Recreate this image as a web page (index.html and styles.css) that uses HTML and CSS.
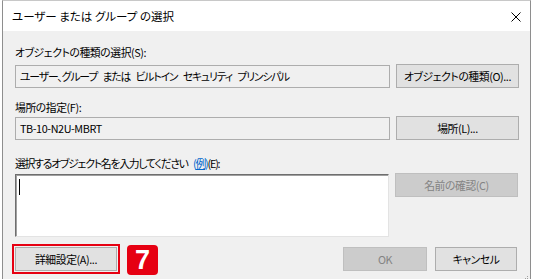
FILE: index.html
```html
<!DOCTYPE html>
<html lang="ja">
<head>
    <meta charset="UTF-8">
    <meta name="viewport" content="width=device-width, initial-scale=1.0">
    <title>ユーザー または グループ の選択</title>
    <link rel="stylesheet" href="styles.css">
</head>
<body>
    <div class="dialog">
        <div class="title-bar">
            <span class="title">ユーザー または グループ の選択</span>
            <svg class="close" width="10" height="10" viewBox="0 0 10 10">
                <path d="M0.5 0.5 L9.5 9.5 M9.5 0.5 L0.5 9.5" stroke="#000" stroke-width="1" fill="none"/>
            </svg>
        </div>
        <div class="dialog-body">
            <div class="label first">オブジェクトの種類の選択(S):</div>
            <div class="row">
                <div class="readonly-box narrow">ユーザー、グループ または ビルトイン セキュリティ プリンシパル</div>
                <button class="win-button side">オブジェクトの種類(O)...</button>
            </div>

            <div class="label">場所の指定(F):</div>
            <div class="row">
                <div class="readonly-box">TB-10-N2U-MBRT</div>
                <button class="win-button side">場所(L)...</button>
            </div>

            <div class="label third">選択するオブジェクト名を入力してください <span class="link">(<u>例</u>)</span>(E):</div>
            <div class="row top">
                <div class="names-input"><span class="caret"></span></div>
                <button class="win-button side disabled">名前の確認(C)</button>
            </div>

            <div class="bottom-row">
                <button class="win-button advanced">詳細設定(A)...</button>
                <div class="step-badge">7</div>
                <div class="spacer"></div>
                <button class="win-button ok disabled">OK</button>
                <button class="win-button cancel">キャンセル</button>
            </div>
        </div>
        <svg class="grip" width="7" height="7" viewBox="0 0 7 7">
            <rect x="5" y="1" width="1" height="1" fill="#a0a0a0"/>
            <rect x="3" y="3" width="1" height="1" fill="#a0a0a0"/>
            <rect x="5" y="3" width="1" height="1" fill="#a0a0a0"/>
            <rect x="1" y="5" width="1" height="1" fill="#a0a0a0"/>
            <rect x="3" y="5" width="1" height="1" fill="#a0a0a0"/>
            <rect x="5" y="5" width="1" height="1" fill="#a0a0a0"/>
        </svg>
    </div>
</body>
</html>
```

FILE: styles.css
```css
body {
    margin: 0;
    background-color: #ffffff;
    font-family: "Noto Sans CJK JP", "Noto Sans", sans-serif;
    font-size: 10.8px;
    letter-spacing: -0.4px;
    font-feature-settings: "palt" 1; /* narrow kana, like Meiryo UI */
    color: #000000;
}

.dialog {
    position: relative;
    width: 529px;
    margin-left: 2px;
    border: 1px solid #8e8e8e;
    border-top-color: #c8c8c8;
    box-sizing: border-box;
    background-color: #f0f0f0;
}

.title-bar {
    height: 30px;
    background-color: #ffffff;
    display: flex;
    align-items: center;
    justify-content: space-between;
    padding: 0 9px 0 9px;
}

.title {
    font-size: 11.5px;
    letter-spacing: 0;
    margin-top: -1px;
}

.close {
    margin-top: 2px;
}

.dialog-body {
    padding: 13px 11px 8px 12px;
}

.label {
    line-height: 16px;
    height: 16px;
    margin-bottom: 4px;
}

.label.first {
    margin-bottom: 4px;
}

.label:not(.first) {
    margin-top: 11px;
    margin-bottom: 1px;
}

.label.third {
    margin-top: 15px;
    margin-bottom: 2px;
    letter-spacing: -1.2px;
    word-spacing: 4px;
}

.link {
    color: #0066cc;
}

.row {
    display: flex;
    gap: 6px;
    align-items: center;
}

.row.top {
    align-items: flex-start;
}

.readonly-box {
    width: 375px;
    height: 23px;
    box-sizing: border-box;
    border: 1px solid #adadad;
    background-color: #f0f0f0;
    padding: 0 4px;
    display: flex;
    align-items: center;
    white-space: nowrap;
}

.readonly-box.narrow {
    letter-spacing: -1.1px;
    word-spacing: 4px;
}

.names-input {
    width: 374px;
    height: 63px;
    margin-top: 1px;
    box-sizing: border-box;
    background-color: #ffffff;
    border: 1px solid;
    border-color: #6e6e6e #e3e3e3 #e3e3e3 #6e6e6e;
    box-shadow: inset 1px 1px #a0a0a0;
    padding: 4px 3px;
}

.caret {
    display: block;
    width: 1px;
    height: 16px;
    background-color: #000000;
}

.win-button {
    height: 24px;
    box-sizing: border-box;
    border: 1px solid #adadad;
    background-color: #e1e1e1;
    font-family: inherit;
    font-size: 10.8px;
    letter-spacing: -0.4px;
    font-feature-settings: "palt" 1;
    color: #000000;
    padding: 0;
}

.win-button.side {
    width: 123px;
}

.win-button.disabled {
    background-color: #cccccc;
    border-color: #bfbfbf;
    color: #838383;
}

.bottom-row {
    display: flex;
    align-items: flex-start;
    margin-top: 10px;
    margin-right: 2px;
}

.win-button.advanced {
    width: 102px;
    outline: 2px solid #e60012;
    outline-offset: 1px;
}

.step-badge {
    width: 31px;
    height: 30px;
    margin-left: 10px;
    margin-top: -2px;
    border-radius: 4px;
    background-color: #e60012;
    color: #ffffff;
    font-family: "Liberation Sans", sans-serif;
    font-weight: bold;
    font-size: 27px;
    letter-spacing: 0;
    line-height: 30px;
    text-align: center;
}

.spacer {
    flex: 1;
}

.win-button.ok {
    width: 84px;
}

.win-button.cancel {
    width: 82px;
    margin-left: 8px;
}

.grip {
    position: absolute;
    right: 1px;
    bottom: 1px;
}
```
